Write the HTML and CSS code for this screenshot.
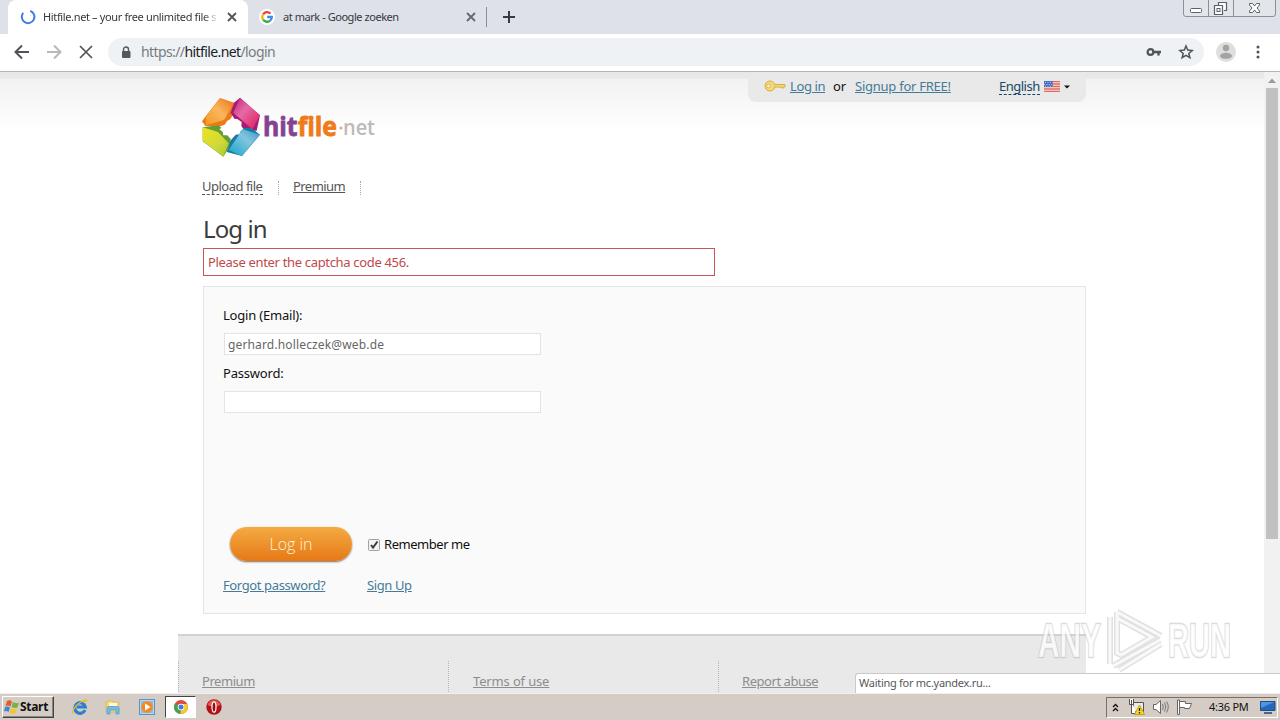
FILE: index.html
```
<!DOCTYPE html>
<html lang="en">

<head>
  <meta charset="UTF-8">
  <meta name="viewport" content="width=device-width, initial-scale=1.0">
  <title>Hitfile.net – your free unlimited file storage</title>
  <link rel="stylesheet" href="styles.css">
</head>

<body>
  <div class="tabs">
    <div class="tab active">
      <svg class="spinner" width="16" height="16" viewBox="0 0 16 16"><path d="M10.2 1.9A6.3 6.3 0 1 1 3.2 3.9" fill="none" stroke="#3f7be0" stroke-width="2"/></svg>
      <span class="tab-title fade">Hitfile.net – your free unlimited file s</span>
      <svg class="close" width="10" height="10" viewBox="0 0 10 10"><path d="M1 1L9 9M9 1L1 9" stroke="#50545a" stroke-width="1.8"/></svg>
    </div>
    <div class="tab second">
      <svg width="16" height="16" viewBox="0 0 16 16">
        <circle cx="8" cy="8" r="8" fill="#fff"/>
        <g fill="none" stroke-width="2.3">
          <path d="M4.1 5.3A4.8 4.8 0 0 1 11.5 4.6" stroke="#ea4335"/>
          <path d="M4.1 10.7A4.8 4.8 0 0 1 4.1 5.3" stroke="#fbbc05"/>
          <path d="M11.3 11.5A4.8 4.8 0 0 1 4.1 10.7" stroke="#34a853"/>
          <path d="M8.2 8H12.8A4.8 4.8 0 0 1 11.3 11.5" stroke="#4285f4"/>
        </g>
      </svg>
      <span class="tab-title">at mark - Google zoeken</span>
      <svg class="close" width="10" height="10" viewBox="0 0 10 10"><path d="M1 1L9 9M9 1L1 9" stroke="#65686e" stroke-width="1.8"/></svg>
    </div>
    <div class="tab-line"></div>
    <svg class="plus" width="12" height="12" viewBox="0 0 12 12"><path d="M6 0V12M0 6H12" stroke="#363b43" stroke-width="2"/></svg>
    <svg class="win-buttons" width="94" height="18" viewBox="0 0 94 18">
      <path d="M.5 0V14Q.5 16.500 3 16.500H90Q92.500 16.500 92.500 14V0M25.500 0V16M50.500 0V16" fill="#e2e5ea" stroke="#8c9098"/>
      <rect x="7.500" y="8.500" width="11" height="4" rx="1" fill="#fff" stroke="#5b6069"/>
      <path d="M35.500 5V2.500H43.500V10.500H41M31.500 5.500H39.500V14.500H31.500Z" fill="#fff" stroke="#5b6069" stroke-width="1.200"/>
      <rect x="34" y="8.500" width="3" height="3" fill="#fff" stroke="#5b6069"/>
      <path d="M66.500 3.500H69.500L71.500 6L73.500 3.500H76.500V5L74 8L76.500 11V12.500H73.500L71.500 10L69.500 12.500H66.500V11L69 8L66.500 5Z" fill="#fff" stroke="#5b6069"/>
    </svg>
  </div>

  <div class="toolbar">
    <svg class="nav-icon" width="16" height="16" viewBox="0 0 16 16"><path d="M15 8H2M8 1.500L1.500 8L8 14.500" fill="none" stroke="#505357" stroke-width="2"/></svg>
    <svg class="nav-icon" width="16" height="16" viewBox="0 0 16 16"><path d="M1 8H14M8 1.500L14.500 8L8 14.500" fill="none" stroke="#b7b9bc" stroke-width="2"/></svg>
    <svg class="nav-icon" width="16" height="16" viewBox="0 0 16 16"><path d="M2 2L14 14M14 2L2 14" stroke="#505357" stroke-width="1.700"/></svg>
    <div class="address">
      <svg class="lock" width="10" height="13" viewBox="0 0 10 13"><path d="M2.500 5.500V3.500A2.500 2.500 0 0 1 7.500 3.500V5.500" fill="none" stroke="#54575c" stroke-width="1.400"/><rect x="1" y="5" width="8.500" height="7" rx="1" fill="#54575c"/></svg>
      <span class="url">https://<b>hitfile.net</b>/login</span>
      <svg class="pass-key" width="16" height="10" viewBox="0 0 16 10"><circle cx="4.500" cy="5" r="2.900" fill="none" stroke="#505357" stroke-width="2.200"/><path d="M7 5H15M12.500 5V8.500" stroke="#505357" stroke-width="2.400"/></svg>
      <svg width="16" height="16" viewBox="0 0 16 16"><path d="M8 2L9.700 6.100L14.200 6.500L10.800 9.400L11.900 13.700L8 11.400L4.100 13.700L5.200 9.400L1.800 6.500L6.300 6.100Z" fill="none" stroke="#505357" stroke-width="1.500"/></svg>
    </div>
    <svg class="avatar" width="20" height="20" viewBox="0 0 20 20"><circle cx="10" cy="10" r="10" fill="#dedede"/><circle cx="10" cy="6" r="3.200" fill="#a3a3a3"/><ellipse cx="10" cy="13.800" rx="6" ry="3" fill="#a3a3a3"/></svg>
    <svg class="dots" width="4" height="14" viewBox="0 0 4 14"><g fill="#505357"><circle cx="2" cy="2" r="1.500"/><circle cx="2" cy="7" r="1.500"/><circle cx="2" cy="12" r="1.500"/></g></svg>
  </div>

  <div class="viewport">
    <div class="page">
      <div class="top-bar">
        <svg class="key" width="22" height="12" viewBox="0 0 22 12"><circle cx="6" cy="6" r="5" fill="#f4d977" stroke="#d4ad42"/><circle cx="4.500" cy="6" r="1.800" fill="#fbf5df" stroke="#d4ad42" stroke-width=".8"/><path d="M10.500 4.500H21V7H19.500V8H17.500V7H10.500" fill="#f4d977" stroke="#d4ad42"/></svg>
        <a class="link t-login">Log in</a>
        <span class="t-or">or</span>
        <a class="link t-signup">Signup for FREE!</a>
        <a class="lang">English</a>
        <svg class="flag" width="16" height="11" viewBox="0 0 16 11"><rect width="16" height="11" fill="#f6e5e3"/><path d="M0 .5H16M0 3H16M0 5.500H16M0 8H16M0 10.500H16" stroke="#df6a60" stroke-width="1.400"/><rect width="9" height="6" fill="#4b70c0"/><path d="M1 1.500H9M0 3.500H9M1 5.200H9" stroke="#cbd8f2" stroke-dasharray="1 1.500" stroke-width=".8"/></svg>
        <svg class="caret" width="6" height="4" viewBox="0 0 6 4"><path d="M0 .5H6L3 3.500Z" fill="#111"/></svg>
      </div>

      <svg class="logo" width="180" height="64" viewBox="0 0 180 64">
        <defs>
          <linearGradient id="orange" x1="0" y1="1" x2="1" y2="0"><stop offset="0" stop-color="#f39a1f"/><stop offset=".5" stop-color="#f8b75c"/><stop offset="1" stop-color="#ee7016"/></linearGradient>
          <linearGradient id="pink" x1="0" y1="0" x2="1" y2="1"><stop offset="0" stop-color="#c0207e"/><stop offset=".4" stop-color="#e56ba4"/><stop offset="1" stop-color="#e0185c"/></linearGradient>
          <linearGradient id="blue" x1="1" y1="0" x2="0" y2="1"><stop offset="0" stop-color="#3c9cc4"/><stop offset=".4" stop-color="#83c4de"/><stop offset="1" stop-color="#12a5cb"/></linearGradient>
          <linearGradient id="green" x1="0" y1="0" x2="1" y2="1"><stop offset="0" stop-color="#ece31a"/><stop offset=".6" stop-color="#d0d93a"/><stop offset="1" stop-color="#a5c52e"/></linearGradient>
        </defs>
        <g transform="scale(.3333) translate(-12 -12)">
          <path d="M12 88L22 74L66 18L108 32L104 70L88 96L60 104L22 102Z" fill="#ec7a18"/>
          <path d="M98 62L108 32L126 17L186 70L176 116L150 116L124 104Z" fill="#a51c74"/>
          <path d="M186 128L160 108L130 108L94 150L86 180L132 192Z" fill="#177ba8"/>
          <path d="M14 106L62 100L100 136L92 168L76 194L14 148Z" fill="#659c33"/>
          <path d="M66 19L107 34L78 84L23 100L24 74Z" fill="url(#orange)"/>
          <path d="M126 18L186 70L163 112L106 62Z" fill="url(#pink)"/>
          <path d="M134 112L184 128L132 192L92 174Z" fill="url(#blue)"/>
          <path d="M15 106L60 120L92 154L76 194L14 146Z" fill="url(#green)"/>
          <path d="M88 86L100 80L118 81L131 90L130 102L136 110L128 118L124 127L112 128L98 141L88 130L76 130L74 119L64 112L76 104Z" fill="#fff"/>
        </g>
        <text class="logo-text" x="61" y="40" textLength="74" lengthAdjust="spacingAndGlyphs"><tspan fill="#854293" stroke="#854293">hit</tspan><tspan fill="#ef7a1a" stroke="#ef7a1a">file</tspan></text>
        <circle cx="139" cy="32" r="1.500" fill="#e8a66d"/>
        <text class="logo-net" x="141" y="38.500" textLength="32" lengthAdjust="spacingAndGlyphs" fill="#b9bbbd">net</text>
      </svg>

      <div class="menu">
        <a class="upload">Upload file</a>
        <i class="sep"></i>
        <a class="premium">Premium</a>
        <i class="sep"></i>
      </div>

      <h1>Log in</h1>
      <div class="error">Please enter the captcha code 456.</div>

      <form class="login-form">
        <label class="l-email" for="email">Login (Email):</label>
        <input type="text" id="email" value="gerhard.holleczek@web.de">
        <label class="l-pass" for="password">Password:</label>
        <input type="password" id="password">
        <div class="actions">
          <button type="button" class="btn">Log in</button>
          <svg class="checkbox" width="12" height="12" viewBox="0 0 12 12"><rect x=".5" y=".5" width="11" height="11" rx="1" fill="#f2f2f2" stroke="#a0a0a0"/><path d="M3 6L5 8.500L9.500 2.500" fill="none" stroke="#3d3d3d" stroke-width="2"/></svg>
          <span class="remember">Remember me</span>
        </div>
        <div class="form-links">
          <a class="link forgot">Forgot password?</a>
          <a class="link signup">Sign Up</a>
        </div>
      </form>

      <div class="footer">
        <div class="col"><a class="f-premium">Premium</a></div>
        <div class="col"><a class="f-terms">Terms of use</a></div>
        <div class="col"><a class="f-abuse">Report abuse</a></div>
      </div>
    </div>
    <div class="scrollbar">
      <svg width="16" height="16" viewBox="0 0 16 16"><path d="M4 11L8 6.500L12 11Z" fill="#9b9b9b"/></svg>
      <div class="thumb"></div>
    </div>
    <div class="status">Waiting for mc.yandex.ru...</div>
    <svg class="watermark" width="204" height="70" viewBox="0 0 204 70">
      <g class="wm-line shade">
        <path d="M83 6L127 30M76 11V58M83 6V47L87 49L118 31L83 12M79 60L126 34M85 64L127 38"/>
      </g>
      <text x="4" y="51" textLength="63" lengthAdjust="spacingAndGlyphs">ANY</text>
      <text x="134" y="51" textLength="63" lengthAdjust="spacingAndGlyphs">RUN</text>
      <g class="wm-line">
        <path d="M83 6L127 30M76 11V58M83 6V47L87 49L118 31L83 12M79 60L126 34M85 64L127 38"/>
      </g>
    </svg>
  </div>

  <div class="taskbar">
    <div class="start">
      <svg width="16" height="16" viewBox="0 0 16 16"><path d="M3 2Q6 .5 8 2.500L6.500 7.500Q4 6 1.500 7Z" fill="#e8592b"/><path d="M9 3Q12 5 15 3.500L13.500 8.500Q10.500 9.500 7.500 8Z" fill="#76b544"/><path d="M1 8Q4 7 6 8.500L4.500 13Q2.500 11.500 0 12.500Z" fill="#3c87d4"/><path d="M7 9.200Q10 11 13 9.800L11.500 14.500Q8.500 15.500 5.500 13.700Z" fill="#f8c332"/></svg>
      <b>Start</b>
    </div>
    <svg class="quick ie" width="16" height="16" viewBox="0 0 16 16"><path d="M13 11A5.300 5.300 0 1 1 13.300 8H5" fill="none" stroke="#2b7fd0" stroke-width="3.200"/><path d="M1.500 15Q-1 12 5 6Q12 0 15.500 1.500Q14 1.500 11 3.500" fill="none" stroke="#e6bb35" stroke-width="1.200"/></svg>
    <svg class="quick folder" width="16" height="16" viewBox="0 0 16 16"><path d="M1 3L6 1L8 3H14V13H1Z" fill="#f2d878" stroke="#d9b84f" stroke-width=".7"/><path d="M4 4H12V7H4Z" fill="#fff8d9"/><path d="M2 15V9Q2 7.500 4 7.500H12Q14 7.500 14 9V15H11V11H5V15Z" fill="#72bce5" stroke="#4a9aca" stroke-width=".7"/></svg>
    <svg class="quick media" width="16" height="16" viewBox="0 0 16 16"><rect x=".5" y=".5" width="15" height="15" fill="#b9d8f0" stroke="#5b91c4"/><rect x="2" y="2" width="12" height="12" fill="#8cbce3"/><circle cx="8" cy="8" r="5.800" fill="#f48a1d"/><path d="M6 4.500L11.500 8L6 11.500Z" fill="#fff"/></svg>
    <div class="running">
      <svg width="14" height="14" viewBox="0 0 14 14"><circle cx="7" cy="7" r="7" fill="#de4a3c"/><path d="M7 7L1 3.500A7 7 0 0 0 6.500 14L10 9Z" fill="#45a254"/><path d="M7 7L6.500 14A7 7 0 0 0 13.200 4H7Z" fill="#f5c932"/><circle cx="7" cy="7" r="3.300" fill="#fff"/><circle cx="7" cy="7" r="2.500" fill="#3d7de0"/></svg>
    </div>
    <svg class="quick opera" width="16" height="16" viewBox="0 0 16 16"><circle cx="8" cy="8" r="7.700" fill="#b01218"/><path d="M1.500 6A6.800 6.800 0 0 1 14.500 6Q8 9 1.500 6Z" fill="#e45a55"/><ellipse cx="8" cy="8" rx="2" ry="5.200" fill="#97090e" stroke="#fff" stroke-width="1.200"/></svg>
    <div class="tray">
      <svg class="chevrons" width="7" height="9" viewBox="0 0 7 9"><path d="M1 4L3.500 1.500L6 4M1 8L3.500 5.500L6 8" fill="none" stroke="#111" stroke-width="1.300"/></svg>
      <svg class="network" width="17" height="16" viewBox="0 0 17 16"><path d="M5.500 3.500H15.500V12.500H5.500Z" fill="#ebe9e6" stroke="#55534f"/><path d="M1.500 0V5.500H5.500V0M3.500 1V14.500H8" fill="#fff" stroke="#55534f"/><path d="M11.500 6L16.500 15.500H6.500Z" fill="#f5d727" stroke="#c5a310"/><path d="M11.500 9V12M11.500 13V14.500" stroke="#222" stroke-width="1.300"/></svg>
      <svg class="speaker" width="17" height="16" viewBox="0 0 17 16"><path d="M1.500 5.500H4L8.500 1.500V14.500L4 10.500H1.500Z" fill="#fff" stroke="#666"/><path d="M10.500 5Q12 8 10.500 11M12.500 3.500Q15 8 12.500 12.500M14.500 2.500Q18 8 14.500 13.500" fill="none" stroke="#777"/></svg>
      <svg class="alert" width="17" height="16" viewBox="0 0 17 16"><path d="M1.500 1V15.500H3.500V1Z" fill="#fff" stroke="#666"/><path d="M3.500 2.500H9.500V4.500H15.500L13.500 9.500H8.500V8.500H3.500Z" fill="#fff" stroke="#666"/></svg>
      <span class="clock">4:36 PM</span>
      <svg class="desktop" width="16" height="14" viewBox="0 0 16 14"><path d="M.5 1.500H15V10.500H.5Z" fill="#2468bd" stroke="#214d85"/><path d="M1 2H14.500L1 8Z" fill="#4f95df"/><path d="M4 13H12" stroke="#4c6685" stroke-width="2"/></svg>
    </div>
  </div>
</body>

</html>
```
FILE: styles.css
```
* {
  box-sizing: border-box;
}

body {
  margin: 0;
  width: 1280px;
  height: 720px;
  overflow: hidden;
  display: flex;
  flex-direction: column;
  background: #fff;
  font-family: "Noto Sans", sans-serif;
  font-size: 13px;
  color: #111;
}

svg {
  display: block;
  flex: none;
}

span,
a,
label {
  white-space: nowrap;
}

/* browser tabs */
.tabs {
  display: flex;
  flex: none;
  height: 34px;
  background: #dee1e8;
}

.tab {
  display: flex;
  align-items: center;
  height: 34px;
  font-size: 11px;
  color: #35383e;
}

.active {
  width: 240px;
  margin-left: 8px;
  padding-left: 12px;
  background: #fff;
  border-radius: 8px 8px 0 0;
}

.tab-title {
  width: 176px;
  margin: -2px 0 0 7px;
  overflow: hidden;
  letter-spacing: -0.45px;
}

.fade {
  letter-spacing: -0.36px;
  -webkit-mask-image: linear-gradient(90deg, #000 160px, transparent 176px);
  mask-image: linear-gradient(90deg, #000 160px, transparent 176px);
}

.active .close {
  margin-left: 8px;
}

.second {
  padding-left: 11px;
}

.second .tab-title {
  margin-left: 8px;
}

.second .close {
  margin-left: 7px;
}

.tab-line {
  width: 1px;
  height: 20px;
  margin: 7px 0 0 10px;
  background: #8b8e94;
}

.plus {
  margin: 11px 0 0 16px;
}

.win-buttons {
  margin-left: auto;
  margin-right: 3px;
}

/* navigation */
.toolbar {
  display: flex;
  flex: none;
  align-items: center;
  height: 38px;
  padding: 0 0 1px 14px;
  border-bottom: 1px solid #b3b6b5;
}

.nav-icon {
  margin-right: 16px;
}

.address {
  display: flex;
  align-items: center;
  width: 1096px;
  height: 28px;
  margin-left: -2px;
  padding: 0 10px 0 13px;
  border-radius: 14px;
  background: #eff2f5;
}

.url {
  flex: 1;
  margin: -1px 0 0 10px;
  font-size: 14px;
  color: #777b80;
  letter-spacing: -0.6px;
}

.url b {
  font-weight: normal;
  color: #202124;
}

.pass-key {
  margin-right: 16px;
}

.avatar {
  margin-left: 12px;
}

.dots {
  margin-left: 20px;
}

/* page */
.viewport {
  position: relative;
  display: flex;
  flex: none;
  height: 621px;
  overflow: hidden;
}

.page {
  display: flex;
  flex-direction: column;
  width: 1264px;
  padding: 0 178px 0 203px;
  background: linear-gradient(#e8e8e8 0, #e8e8e8 6px, #f2f2f2 7px, #fff 60px);
}

.top-bar {
  display: flex;
  flex: none;
  align-items: center;
  align-self: flex-end;
  width: 338px;
  height: 30px;
  padding: 0 0 2px 16px;
  border-radius: 0 0 8px 8px;
  background: #e9e9e9;
}

.link {
  color: #457a98;
  text-decoration: underline;
}

.t-login {
  width: 36px;
  margin-left: 4px;
  letter-spacing: -0.4px;
}

.t-or {
  width: 13px;
  margin-left: 7px;
}

.t-signup {
  width: 97px;
  margin-left: 9px;
  letter-spacing: -0.25px;
}

.lang {
  width: 41px;
  height: 17px;
  margin-left: 47px;
  line-height: 16px;
  letter-spacing: -0.5px;
  color: #164764;
  border-bottom: 1px dashed #164764;
}

.flag {
  margin-left: 4px;
}

.caret {
  margin: 2px 0 0 4px;
}

.logo {
  margin: -6px 0 0 -1px;
}

.logo-text {
  font: bold 27px "Open Sans", sans-serif;
  stroke-width: 0.8px;
}

.logo-net {
  font: 600 22px "Open Sans", sans-serif;
}

.menu {
  display: flex;
  flex: none;
  height: 18px;
  margin: 18px 0 0 -1px;
  color: #555;
  line-height: 17px;
}

.upload {
  width: 61px;
  height: 17px;
  letter-spacing: -0.5px;
  border-bottom: 1px dashed #555;
}

.menu .premium {
  width: 52px;
  letter-spacing: -0.55px;
  text-decoration: underline;
}

.sep {
  width: 1px;
  height: 14px;
  margin: 3px 14px 0 15px;
  border-left: 1px dotted #aaa;
}

h1 {
  height: 34px;
  margin: 16px 0 0;
  font-size: 24px;
  font-weight: normal;
  line-height: 34px;
  letter-spacing: -0.9px;
  color: #3b3b3b;
}

.error {
  flex: none;
  width: 512px;
  height: 28px;
  margin-top: 2px;
  padding-left: 4px;
  line-height: 26px;
  letter-spacing: -0.33px;
  color: #c04a4a;
  border: 1px solid #c75757;
}

.login-form {
  display: flex;
  flex: none;
  flex-direction: column;
  align-items: flex-start;
  width: 883px;
  height: 328px;
  margin-top: 10px;
  padding: 19px 20px 0;
  background: #fafafa;
  border: 1px solid #e6e4e6;
}

.login-form label {
  height: 18px;
  margin-left: -1px;
  line-height: 18px;
  letter-spacing: -0.2px;
}

.login-form input {
  width: 317px;
  height: 22px;
  padding: 1px 3px;
  font: 12px "Noto Sans", sans-serif;
  letter-spacing: 0.15px;
  color: #666;
  background: #fff;
  border: 1px solid #e4e4e4;
  outline: none;
}

#email {
  margin: 9px 0;
}

#password {
  margin-top: 9px;
}

.actions {
  display: flex;
  align-items: center;
  margin: 114px 0 0 6px;
}

.btn {
  width: 122px;
  height: 34px;
  padding: 0;
  border: 0;
  border-radius: 18px;
  background: linear-gradient(#f4ab43, #e67916);
  box-shadow: 0 1px 2px #7c6a5a;
  font: 300 16px "Open Sans", sans-serif;
  color: #fff4d8;
}

.checkbox {
  margin: 1px 4px 0 16px;
}

.remember {
  letter-spacing: -0.45px;
}

.form-links {
  display: flex;
  margin: 15px 0 0 -1px;
  line-height: 18px;
  letter-spacing: -0.38px;
}

.forgot {
  width: 144px;
}

.footer {
  display: flex;
  flex: none;
  width: 908px;
  height: 90px;
  margin: 20px 0 0 -25px;
  padding-top: 25px;
  background: #e9e9e9;
  border-top: 2px solid #d2d2d2;
}

.col {
  width: 270px;
  padding: 11px 0 0 23px;
  border-left: 1px dotted #b5b5b5;
  color: #8d8d8d;
  letter-spacing: -0.45px;
}

.col .f-terms {
  margin-left: 1px;
  letter-spacing: -0.15px;
}

.col a {
  text-decoration: underline;
}

.scrollbar {
  width: 16px;
  background: #f1f1f1;
}

.thumb {
  width: 12px;
  height: 451px;
  margin-left: 2px;
  background: #c1c1c1;
}

.status {
  position: absolute;
  right: 0;
  bottom: 0;
  width: 425px;
  height: 20px;
  padding-left: 3px;
  font-size: 11px;
  line-height: 18px;
  letter-spacing: -0.27px;
  color: #55585b;
  background: #fff;
  border: 1px solid #c9c9c9;
  border-width: 1px 0 0 1px;
  border-radius: 3px 0 0 0;
}

.watermark {
  position: absolute;
  left: 1034px;
  top: 534px;
}

.watermark text {
  font: bold 48px "Liberation Sans", sans-serif;
  fill: #fff;
  fill-opacity: 0.75;
  stroke: #999;
  stroke-opacity: 0.35;
  stroke-width: 2.5px;
  paint-order: stroke;
}

.wm-line {
  fill: none;
  stroke: #fff;
  stroke-opacity: 0.8;
  stroke-width: 3px;
}

.shade {
  stroke: #888;
  stroke-opacity: 0.25;
  stroke-width: 6px;
}

/* taskbar */
.taskbar {
  display: flex;
  flex: none;
  align-items: center;
  height: 27px;
  background: #d5cdc5;
  border-top: 1px solid #f2eeea;
}

.start {
  display: flex;
  align-items: center;
  width: 52px;
  height: 22px;
  margin-left: 2px;
  padding-left: 1px;
  font-size: 12px;
  letter-spacing: -0.3px;
  border: 1px solid;
  border-color: #fff #444 #444 #fff;
  box-shadow: inset -1px -1px #8b857e;
}

.start b {
  margin-top: -2px;
}

.ie {
  margin-left: 18px;
}

.folder {
  margin-left: 17px;
}

.media {
  margin-left: 18px;
}

.running {
  display: flex;
  align-items: center;
  justify-content: center;
  width: 31px;
  height: 22px;
  margin-left: 10px;
  background: #fff;
  border: 1px solid;
  border-color: #444 #fff #fff #444;
}

.opera {
  margin-left: 10px;
}

.tray {
  display: flex;
  align-items: center;
  width: 172px;
  height: 21px;
  margin: 0 2px 0 auto;
  padding-left: 5px;
  border: 1px solid;
  border-color: #77716b #fff #fff #77716b;
}

.network {
  margin-left: 9px;
}

.speaker {
  margin-left: 7px;
}

.alert {
  margin-left: 7px;
}

.clock {
  width: 40px;
  margin: -2px 0 0 16px;
  font-size: 11px;
  letter-spacing: -0.25px;
}

.desktop {
  margin-left: 11px;
}
```
